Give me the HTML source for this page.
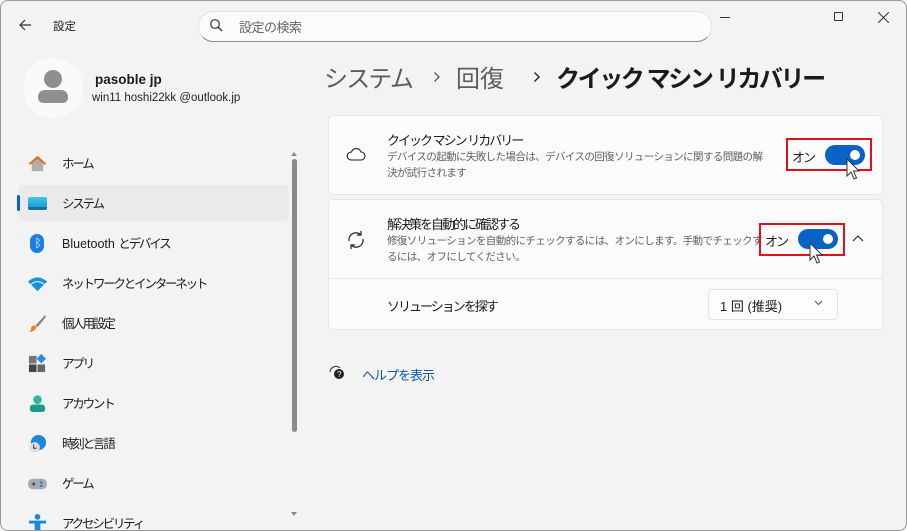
<!DOCTYPE html>
<html><head><meta charset="utf-8"><style>
*{box-sizing:border-box;margin:0;padding:0}
body{width:907px;height:531px;overflow:hidden;background:#f3f3f3;font-family:"Liberation Sans","Noto Sans CJK JP",sans-serif;color:#1b1b1b;position:relative}
.win{position:absolute;left:0;top:0;width:907px;height:531px;border:1px solid #9a9a9a;border-radius:8px;overflow:hidden}
.a{position:absolute;white-space:nowrap}
.nav{position:absolute;left:17px;width:271px;height:36px;border-radius:5px;font-size:12.5px;letter-spacing:-2.2px;display:flex;align-items:center}
.nav .ic{position:absolute;left:10px;top:9px;width:19px;height:19px}
.nav span{position:absolute;left:44px;top:8px}
.card{position:absolute;left:327px;width:555px;background:#fbfbfb;border:1px solid #e6e6e6;border-radius:5px}
.t{font-size:13px;letter-spacing:-2px;color:#1b1b1b}
.d{font-size:10.5px;letter-spacing:-0.6px;color:#606060;line-height:16px}
.tog{position:absolute;width:40px;height:20px;border-radius:10px;background:#0a63c4}
.tog::after{content:"";position:absolute;right:5px;top:5px;width:10px;height:10px;border-radius:50%;background:#fff}
.red{position:absolute;border:2px solid #e0101c}
.bc{font-size:24px;letter-spacing:-1.8px;top:58px}
</style></head><body><div class="win">
<svg class="a" style="left:17px;top:17px" width="14" height="14" viewBox="0 0 14 14"><path d="M13 7H2M7 2L2 7l5 5" stroke="#333" stroke-width="1.2" fill="none"/></svg>
<div class="a" style="left:52px;top:17px;font-size:11.5px">設定</div>
<div class="a" style="left:197px;top:10px;width:514px;height:31px;background:#fbfbfb;border:1px solid #e3e3e3;border-bottom-color:#8a8a8a;border-radius:15px"></div>
<svg class="a" style="left:208px;top:17px" width="14" height="14" viewBox="0 0 14 14"><circle cx="6" cy="6" r="4.3" stroke="#333" stroke-width="1.2" fill="none"/><path d="M9 9l4 4" stroke="#333" stroke-width="1.3"/></svg>
<div class="a" style="left:238px;top:16px;font-size:13px;letter-spacing:-0.5px;color:#666">設定の検索</div>
<div class="a" style="left:719px;top:16px;width:10px;height:1px;background:#333"></div>
<div class="a" style="left:833px;top:11px;width:9px;height:9px;border:1px solid #333;border-radius:1px"></div>
<svg class="a" style="left:877px;top:11px" width="11" height="11"><path d="M0 0L11 11M11 0L0 11" stroke="#333" stroke-width="1"/></svg>
<div class="a" style="left:22px;top:57px;width:60px;height:60px;border-radius:50%;background:#fafafa"></div>
<div class="a" style="left:43px;top:69px;width:18px;height:18px;border-radius:50%;background:#8f8f8f"></div>
<div class="a" style="left:37px;top:89px;width:30px;height:13px;border-radius:7px 7px 5px 5px;background:#8f8f8f"></div>
<div class="a" style="left:94px;top:71px;font-size:13.5px;font-weight:bold">pasoble jp</div>
<div class="a" style="left:91px;top:91px;font-size:11.5px;color:#222">win11 hoshi22kk @outlook.jp</div>
<div class="nav" style="top:144px"><svg class="ic" viewBox="0 0 20 20"><path d="M10 2L1 10h3v8h12v-8h3z" fill="#b0b0b0"/><path d="M10 2L1 10l1.4 1.4L10 5l7.6 6.4L19 10z" fill="#e86b10"/></svg><span>ホーム</span></div>
<div class="nav" style="top:184px;background:#eaeaea"><div class="a" style="left:-1px;top:10px;width:3px;height:16px;border-radius:2px;background:#0a63c4"></div><div class="ic" style="top:12px;height:13px;background:linear-gradient(#3bc8e8,#1a9fd0);border-radius:2px;border-bottom:3px solid #1a6c9a"></div><span>システム</span></div>
<div class="nav" style="top:224px"><div class="ic" style="left:12px;width:14px;border-radius:7px;background:#1a7fe0;color:#fff;font-size:12px;text-align:center;line-height:19px">ᛒ</div><span><b style="font-weight:normal;letter-spacing:0">Bluetooth </b>とデバイス</span></div>
<div class="nav" style="top:264px"><svg class="ic" viewBox="0 0 20 20"><path d="M0 8Q10 -1 20 8L10 18z" fill="#1a8fe0"/><path d="M3 11Q10 5 17 11" stroke="#fff" stroke-width="1" fill="none"/></svg><span>ネットワークとインターネット</span></div>
<div class="nav" style="top:304px"><svg class="ic" viewBox="0 0 20 20"><path d="M18 1L8 12l2 2L19 3z" fill="#888"/><path d="M7 12l2 2q-2 5-8 5 3-2 2-4 1-3 4-3z" fill="#f08020"/></svg><span>個人用設定</span></div>
<div class="nav" style="top:344px"><svg class="ic" viewBox="0 0 20 20"><rect x="1" y="2" width="8" height="8" fill="#777"/><rect x="1" y="11" width="8" height="8" fill="#444"/><rect x="10" y="11" width="8" height="8" fill="#666"/><path d="M14 0l5 5-5 5-5-5z" fill="#2a8ce8"/></svg><span>アプリ</span></div>
<div class="nav" style="top:384px"><svg class="ic" viewBox="0 0 20 20"><circle cx="10" cy="6" r="4.5" fill="#2fb5a0"/><path d="M2 15q0-4 4-4h8q4 0 4 4v1q0 3-4 3H6q-4 0-4-3z" fill="#1a9a88"/></svg><span>アカウント</span></div>
<div class="nav" style="top:424px"><svg class="ic" viewBox="0 0 20 20"><circle cx="11" cy="9" r="8" fill="#1a8ad8"/><circle cx="7" cy="14" r="5.5" fill="#ddd"/><path d="M6 11v4h3" stroke="#333" fill="none"/></svg><span>時刻と言語</span></div>
<div class="nav" style="top:464px"><svg class="ic" viewBox="0 0 20 20"><rect x="0" y="5" width="20" height="11" rx="5" fill="#a8acb2"/><path d="M4 10.5h4M6 8.5v4" stroke="#333"/><circle cx="14" cy="9" r="1.2" fill="#1a6ad8"/><circle cx="14" cy="12.5" r="1.2" fill="#1a6ad8"/></svg><span>ゲーム</span></div>
<div class="nav" style="top:504px"><svg class="ic" viewBox="0 0 20 20"><circle cx="10" cy="3" r="3" fill="#1a8ad8"/><path d="M1 7h18v3h-6v9H7v-9H1z" fill="#1a8ad8"/></svg><span>アクセシビリティ</span></div>
<div class="a" style="left:290px;top:151px;width:0;height:0;border:3px solid transparent;border-bottom:4px solid #8a8a8a;border-top:0"></div>
<div class="a" style="left:291px;top:158px;width:5px;height:273px;border-radius:3px;background:#8a8a8a"></div>
<div class="a" style="left:290px;top:511px;width:0;height:0;border:3px solid transparent;border-top:4px solid #8a8a8a;border-bottom:0"></div>
<div class="a bc" style="left:323px;color:#5c5c5c">システム</div>
<svg class="a" style="left:432px;top:70px" width="8" height="12"><path d="M1.5 1.5l4.5 4.5-4.5 4.5" stroke="#5c5c5c" stroke-width="1.3" fill="none"/></svg>
<div class="a bc" style="left:455px;color:#5c5c5c;letter-spacing:0">回復</div>
<svg class="a" style="left:532px;top:70px" width="8" height="12"><path d="M1.5 1.5l4.5 4.5-4.5 4.5" stroke="#1b1b1b" stroke-width="1.3" fill="none"/></svg>
<div class="a bc" style="left:555px;font-weight:bold;letter-spacing:-2.4px">クイック マシン リカバリー</div>
<div class="card" style="top:114px;height:80px"></div>
<svg class="a" style="left:345px;top:145px" width="20" height="16" viewBox="0 0 20 16"><path d="M5 14h10a4 4 0 0 0 0-8 5 5 0 0 0-9.5 0A4 4 0 0 0 5 14z" stroke="#222" stroke-width="1.1" fill="none"/></svg>
<div class="a t" style="left:386px;top:129px">クイック マシン リカバリー</div>
<div class="a d" style="left:386px;top:148px">デバイスの起動に失敗した場合は、デバイスの回復ソリューションに関する問題の解<br>決が試行されます</div>
<div class="red" style="left:785px;top:137px;width:86px;height:33px"></div>
<div class="a t" style="left:791px;top:146px">オン</div>
<div class="tog" style="left:824px;top:144px"></div>
<div class="card" style="top:198px;height:131px"></div>
<div class="a" style="left:328px;top:277px;width:553px;height:1px;background:#e6e6e6"></div>
<svg class="a" style="left:345px;top:229px" width="20" height="20" viewBox="0 0 20 20"><path d="M3 11a7 7 0 0 1 12-6M17 9a7 7 0 0 1-12 6" stroke="#222" stroke-width="1.2" fill="none"/><path d="M15 1v4h-4M5 19v-4h4" stroke="#222" stroke-width="1.2" fill="none"/></svg>
<div class="a t" style="left:386px;top:213px">解決策を自動的に確認する</div>
<div class="a d" style="left:386px;top:232px">修復ソリューションを自動的にチェックするには、オンにします。手動でチェックす<br>るには、オフにしてください。</div>
<div class="red" style="left:758px;top:222px;width:86px;height:33px"></div>
<div class="a t" style="left:764px;top:230px">オン</div>
<div class="tog" style="left:797px;top:228px"></div>
<svg class="a" style="left:851px;top:233px" width="12" height="8"><path d="M1 7l5-5 5 5" stroke="#222" stroke-width="1.1" fill="none"/></svg>
<div class="a t" style="left:386px;top:295px">ソリューションを探す</div>
<div class="a" style="left:707px;top:288px;width:130px;height:31px;background:#fdfdfd;border:1px solid #e3e3e3;border-radius:4px"></div>
<div class="a t" style="left:719px;top:295px;letter-spacing:0">1 回 (推奨)</div>
<svg class="a" style="left:813px;top:299px" width="9" height="6"><path d="M1 1l3.5 3.5L8 1" stroke="#555" fill="none"/></svg>
<svg class="a" style="left:845px;top:157px" width="14" height="24" viewBox="0 0 14 24"><path d="M1 1v17l4-4 3 7 2.5-1-3-7h5.5z" fill="#fff" stroke="#333" stroke-width="1"/></svg>
<svg class="a" style="left:808px;top:241px" width="14" height="24" viewBox="0 0 14 24"><path d="M1 1v17l4-4 3 7 2.5-1-3-7h5.5z" fill="#fff" stroke="#333" stroke-width="1"/></svg>
<svg class="a" style="left:327px;top:362px" width="18" height="18" viewBox="0 0 18 18"><path d="M2 9a6 6 0 0 1 10-4" stroke="#333" fill="none"/><circle cx="11" cy="11" r="5" fill="#222"/><text x="9" y="14" font-size="8" fill="#fff" font-family="Liberation Sans">?</text></svg>
<div class="a" style="left:361px;top:364px;font-size:13px;letter-spacing:-1px;color:#0a5aa8">ヘルプを表示</div>
</div></body></html>
